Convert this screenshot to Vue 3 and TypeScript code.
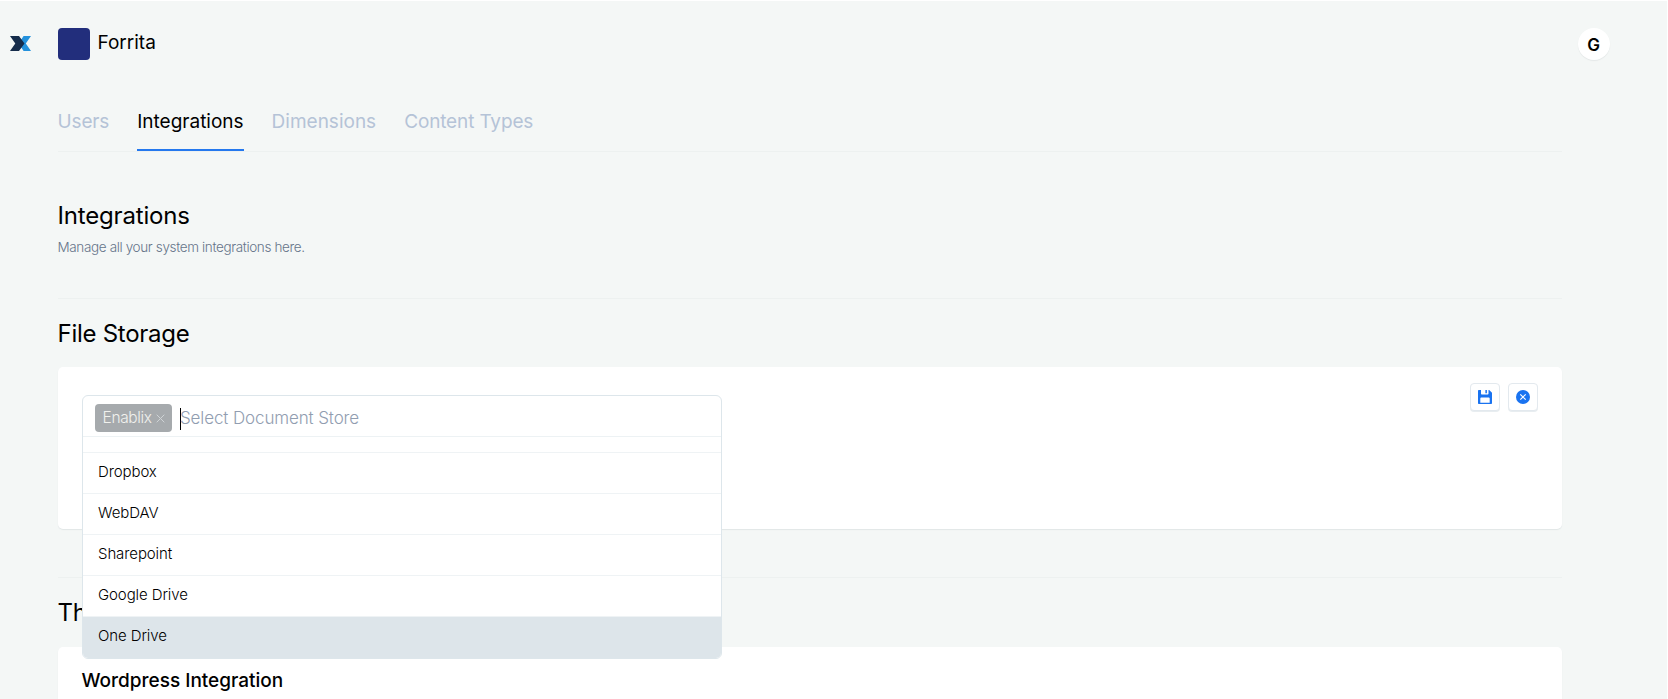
<template>
  <div class="page">
    <!-- Top bar -->
    <header class="topbar">
      <svg class="logo" width="21" height="15" viewBox="0 0 21 15">
        <path fill="#2391dc" d="M13.6 0H21l-5.200 7.500L21 15h-7.400l-3-4.500v-6z" />
        <path fill="#152c4b" d="M0 0h9l5.500 7.500L9 15H0l5.300-7.500z" />
      </svg>
      <div class="company-mark"></div>
      <span class="company-name">{{ company }}</span>
      <div class="avatar">G</div>
    </header>

    <!-- Tabs -->
    <nav class="tabs">
      <a
        v-for="tab in tabs"
        :key="tab.id"
        class="tab"
        :class="[tab.id, { active: tab.id === activeTab }]"
        @click="activeTab = tab.id"
      >{{ tab.label }}</a>
    </nav>

    <main class="content">
      <section class="intro">
        <h2 class="heading">Integrations</h2>
        <p class="subtitle">Manage all your system integrations here.</p>
      </section>

      <section class="storage">
        <h2 class="heading storage-heading">File Storage</h2>
        <div class="card storage-card">
          <div class="select-slot">
            <div class="select">
              <div class="select-control">
                <span class="tag">
                  <span class="tag-label">{{ selected }}</span>
                  <svg width="9" height="9" viewBox="0 0 9 9">
                    <path d="M.7.7l7.6 7.6M8.3.7L.7 8.3" stroke="#cfd3d6" stroke-width="1" fill="none" />
                  </svg>
                </span>
                <span class="caret"></span>
                <span class="placeholder">Select Document Store</span>
              </div>
              <ul class="options">
                <li
                  v-for="(option, index) in options"
                  :key="option"
                  class="option"
                  :class="{ highlighted: index === highlighted }"
                  @mouseenter="highlighted = index"
                >{{ option }}</li>
              </ul>
            </div>
          </div>
          <div class="actions">
            <button class="icon-button" aria-label="Save">
              <svg width="14" height="14" viewBox="0 0 14 14">
                <path fill="#1a73f0" fill-rule="evenodd" d="M1 0h2v3.500c0 .6.4 1 1 1h5.500c.6 0 1-.4 1-1V0h.7L14 2.700V13c0 .6-.4 1-1 1H1c-.6 0-1-.4-1-1V1c0-.6.4-1 1-1zM3.200 7.500c-.5 0-.9.4-.9.9v4.400h9.400V8.400c0-.5-.4-.9-.9-.9z" />
                <path fill="#1a73f0" d="M7.400 0h1.500v3.300H7.400z" />
              </svg>
            </button>
            <button class="icon-button" aria-label="Cancel">
              <svg width="14" height="14" viewBox="0 0 14 14">
                <circle cx="7" cy="7" r="7" fill="#1a73f0" />
                <path d="M4.300 4.300l5.400 5.400M9.700 4.300L4.300 9.700" stroke="#fff" stroke-width="1.200" fill="none" />
              </svg>
            </button>
          </div>
        </div>
      </section>

      <section class="third-party">
        <h2 class="heading third-heading">Th</h2>
        <div class="card wordpress-card">
          <h3 class="card-title">Wordpress Integration</h3>
        </div>
      </section>
    </main>
  </div>
</template>

<script setup lang="ts">
import { ref } from 'vue';

// --- TYPE DEFINITION ---
interface Tab {
  id: string;
  label: string;
}

// --- PAGE DATA ---
const company = 'Forrita';

const tabs: Tab[] = [
  { id: 'users', label: 'Users' },
  { id: 'integrations', label: 'Integrations' },
  { id: 'dimensions', label: 'Dimensions' },
  { id: 'types', label: 'Content Types' },
];

const options: string[] = ['Dropbox', 'WebDAV', 'Sharepoint', 'Google Drive', 'One Drive'];

// --- STATE ---
const activeTab = ref('integrations');
const selected = ref('Enablix');
const highlighted = ref(4);
</script>

<style>
body {
  background: #f4f7f6;
  overflow: hidden;
}
</style>

<style scoped>
.page {
  box-sizing: border-box;
  height: 699px;
  overflow: hidden;
  padding: 0 105px 0 57.5px;
  border-top: 1px solid #fff;
  border-right: 1px solid #fff;
  background: #f4f7f6;
  color: #000;
  font-family: Inter, "Liberation Sans", sans-serif;
}

h2,
h3,
p,
ul {
  margin: 0;
  padding: 0;
  font-weight: 400;
}

/* Top bar */
.topbar {
  display: flex;
  align-items: center;
  height: 32px;
  margin: 0 -48px 0 -47.5px;
  padding-top: 27px;
}

.logo {
  margin: 0 27px 1px 0;
}

.company-mark {
  width: 32px;
  height: 32px;
  border-radius: 4px;
  background: #222e7c;
}

.company-name {
  margin-left: 7.5px;
  font-size: 19px;
  line-height: 30px;
  padding-bottom: 2px;
}

.avatar {
  width: 32px;
  height: 32px;
  margin-left: auto;
  border-radius: 50%;
  background: #fff;
  box-shadow: 0 1px 1px #e4e8e8;
  font-size: 17px;
  font-weight: 600;
  line-height: 34px;
  text-align: center;
  text-indent: -1px;
}

/* Tabs */
.tabs {
  display: flex;
  gap: 28px;
  height: 91px;
  border-bottom: 1px solid #edf1f0;
}

.tab {
  box-sizing: border-box;
  height: 91px;
  padding-top: 48px;
  border-bottom: 2px solid transparent;
  color: #b5c3d7;
  font-size: 19px;
  line-height: 28px;
  white-space: nowrap;
  cursor: pointer;
}

.tab.users,
.tab.types {
  letter-spacing: -0.14px;
}

.tab.active {
  border-color: #2478ee;
  color: #000;
}

/* Headings */
.heading {
  font-size: 24px;
  letter-spacing: -0.18px;
  line-height: 30px;
}

.intro {
  height: 147px;
  box-sizing: border-box;
  padding-top: 49px;
  border-bottom: 1px solid #edf1f0;
}

.subtitle {
  margin-top: 6px;
  color: #66758a;
  font-size: 13.5px;
  font-weight: 300;
  letter-spacing: -0.36px;
  line-height: 20px;
}

.storage-heading {
  padding: 20px 0 18px;
  letter-spacing: -0.27px;
}

.card {
  box-sizing: border-box;
  border-radius: 5px;
  background: #fff;
  box-shadow: 0 1px 1px #e1e6e7;
}

.storage-card {
  display: flex;
  justify-content: space-between;
  height: 162px;
  padding: 28px 24px 0;
}

.select-slot {
  width: 640px;
  height: 42px;
}

/* Document store picker, its list covers what follows the card */
.select {
  position: relative;
  z-index: 2;
  box-sizing: border-box;
  height: 264px;
  overflow: hidden;
  border: 1px solid #dde6eb;
  border-radius: 6px;
  background: #fff;
}

.select-control {
  display: flex;
  align-items: center;
  height: 40px;
  padding-left: 12px;
  border-bottom: 1px solid #edf2f4;
}

.tag {
  display: flex;
  box-sizing: border-box;
  align-items: center;
  justify-content: space-between;
  width: 77px;
  height: 28px;
  margin-top: 4px;
  padding: 0 7px 0 8px;
  border-radius: 4px;
  background: #a6aaad;
  color: #f1f1ed;
  font-size: 15.5px;
  font-weight: 300;
}

.tag-label {
  margin-top: -1px;
  letter-spacing: -0.35px;
}

.caret {
  width: 1px;
  height: 22px;
  margin: 6px 0 0 8px;
  background: #000;
}

.placeholder {
  margin: 3px 0 0 -0.5px;
  color: #919db0;
  font-size: 17px;
  font-weight: 300;
  letter-spacing: -0.12px;
}

.options {
  padding-top: 15px;
  list-style: none;
}

.option {
  box-sizing: border-box;
  height: 41px;
  padding: 5px 0 0 15.5px;
  border-top: 1px solid #eff3f5;
  font-size: 15px;
  font-weight: 350;
  letter-spacing: -0.1px;
  line-height: 27px;
}

.option.highlighted {
  height: 43px;
  background: #dde5ea;
}

/* Card buttons */
.actions {
  display: flex;
  gap: 8px;
  margin-top: -12px;
}

.icon-button {
  display: flex;
  box-sizing: border-box;
  align-items: center;
  justify-content: center;
  width: 30px;
  height: 28px;
  padding: 0;
  border: 1px solid #e3e9ee;
  border-radius: 4px;
  background: #fff;
  box-shadow: 0 1px 0 #e8edf0;
  cursor: pointer;
}

.third-party {
  margin-top: 48px;
  border-top: 1px solid #edf1f0;
}

.third-heading {
  padding: 20px 0 19px;
}

.wordpress-card {
  height: 120px;
  padding: 21px 24px;
}

.card-title {
  font-size: 19px;
  font-weight: 500;
  line-height: 26px;
}
</style>
